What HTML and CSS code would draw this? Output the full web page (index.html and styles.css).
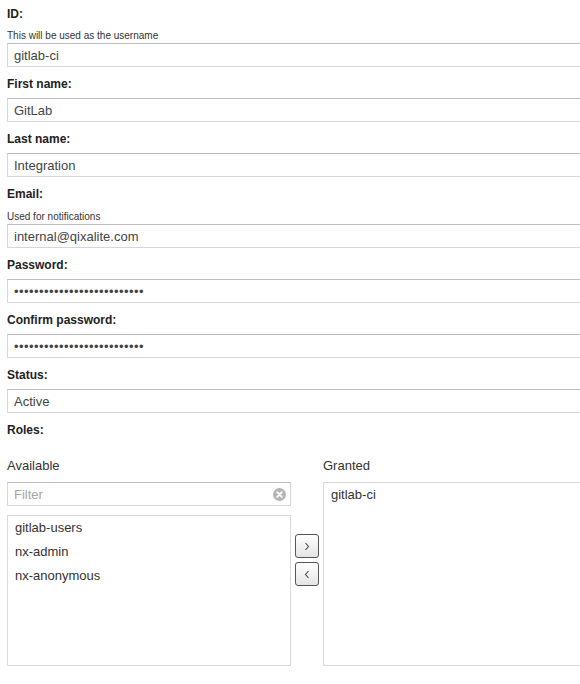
FILE: index.html
```html
<!DOCTYPE html>
<html lang="en">
<head>
<meta charset="utf-8">
<title>Edit user</title>
<link rel="stylesheet" href="styles.css">
</head>
<body>
<form class="user-form">
  <div class="field">
    <label class="field-label">ID:</label>
    <div class="help help-first">This will be used as the username</div>
    <input class="text-input" type="text" value="gitlab-ci">
  </div>
  <div class="field">
    <label class="field-label">First name:</label>
    <input class="text-input" type="text" value="GitLab">
  </div>
  <div class="field">
    <label class="field-label">Last name:</label>
    <input class="text-input" type="text" value="Integration">
  </div>
  <div class="field">
    <label class="field-label">Email:</label>
    <div class="help">Used for notifications</div>
    <input class="text-input" type="text" value="internal@qixalite.com">
  </div>
  <div class="field">
    <label class="field-label">Password:</label>
    <input class="text-input password" type="password" value="abcdefghijklmnopqrstuvwxyz">
  </div>
  <div class="field">
    <label class="field-label">Confirm password:</label>
    <input class="text-input password" type="password" value="abcdefghijklmnopqrstuvwxyz">
  </div>
  <div class="field">
    <label class="field-label">Status:</label>
    <input class="text-input" type="text" value="Active">
  </div>
  <div class="field roles">
    <label class="field-label roles-label">Roles:</label>
    <div class="roles-picker">
      <div class="roles-col">
        <div class="col-title">Available</div>
        <div class="filter">
          <input class="text-input filter-input" type="text" placeholder="Filter">
          <svg class="clear-icon" width="13" height="13" viewBox="0 0 13 13">
            <circle cx="6.5" cy="6.5" r="6.5" fill="#b5b5b5"/>
            <path d="M4.2 4.2 L8.8 8.8 M8.8 4.2 L4.2 8.8" stroke="#fff" stroke-width="1.8" stroke-linecap="round"/>
          </svg>
        </div>
        <ul class="role-list available">
          <li>gitlab-users</li>
          <li>nx-admin</li>
          <li>nx-anonymous</li>
        </ul>
      </div>
      <div class="roles-actions">
        <button type="button" class="move-btn">
          <svg width="6" height="9" viewBox="0 0 6 9"><path d="M1.5 1 L4.5 4.5 L1.5 8" fill="none" stroke="#3b4a5c" stroke-width="1.1"/></svg>
        </button>
        <button type="button" class="move-btn">
          <svg width="6" height="9" viewBox="0 0 6 9"><path d="M4.5 1 L1.5 4.5 L4.5 8" fill="none" stroke="#3b4a5c" stroke-width="1.1"/></svg>
        </button>
      </div>
      <div class="roles-col">
        <div class="col-title">Granted</div>
        <ul class="role-list granted">
          <li>gitlab-ci</li>
        </ul>
      </div>
    </div>
  </div>
</form>
</body>
</html>
```
FILE: styles.css
```css
html, body {
  margin: 0;
  padding: 0;
  background: #fff;
  overflow: hidden;
}

body {
  padding: 6px 7px 0 7px;
  font-family: "Liberation Sans", Arial, sans-serif;
  color: #333;
}

.user-form {
  width: 600px;
}

.field {
  display: flex;
  flex-direction: column;
  margin-bottom: 9px;
}

.field-label {
  font-size: 12px;
  font-weight: bold;
  line-height: 16px;
  color: #222;
  margin-bottom: 6px;
}

.help {
  font-size: 10px;
  line-height: 12px;
  color: #333;
  margin-top: 3px;
  margin-bottom: 1px;
}

.help-first {
  margin-top: 2px;
  margin-bottom: 1px;
}

.text-input {
  box-sizing: border-box;
  width: 100%;
  height: 24px;
  margin: 0;
  padding: 0 6px;
  border: 1px solid #d6d6d6;
  border-top-color: #bdbdbd;
  border-radius: 0;
  font-family: "Liberation Sans", Arial, sans-serif;
  font-size: 13px;
  color: #444;
  background: #fff;
  outline: none;
}

.text-input.password {
  font-size: 13px;
  letter-spacing: 0.45px;
}

.roles-label {
  margin-bottom: 20px;
}

.roles-picker {
  display: flex;
}

.roles-col {
  width: 284px;
  display: flex;
  flex-direction: column;
}

.col-title {
  font-size: 13px;
  line-height: 16px;
  color: #333;
  margin-bottom: 8px;
}

.filter {
  position: relative;
  height: 24px;
}

.filter-input::placeholder {
  color: #a6a6a6;
}

.clear-icon {
  position: absolute;
  right: 5px;
  top: 6px;
}

.role-list {
  list-style: none;
  margin: 0;
  padding: 0;
  box-sizing: border-box;
  border: 1px solid #d9d9d9;
  background: #fff;
  font-size: 13px;
  color: #333;
}

.role-list li {
  line-height: 24px;
  padding-left: 7px;
}

.role-list.available {
  margin-top: 9px;
  height: 151px;
}

.role-list.granted {
  height: 184px;
}

.roles-actions {
  width: 32px;
  display: flex;
  flex-direction: column;
  align-items: center;
  gap: 4px;
  padding-top: 76px;
}

.move-btn {
  box-sizing: border-box;
  width: 24px;
  height: 24px;
  margin: 0;
  padding: 0;
  border: 1px solid #555;
  border-radius: 3px;
  background: linear-gradient(#ffffff, #e4e4e4);
  display: flex;
  align-items: center;
  justify-content: center;
}
```
